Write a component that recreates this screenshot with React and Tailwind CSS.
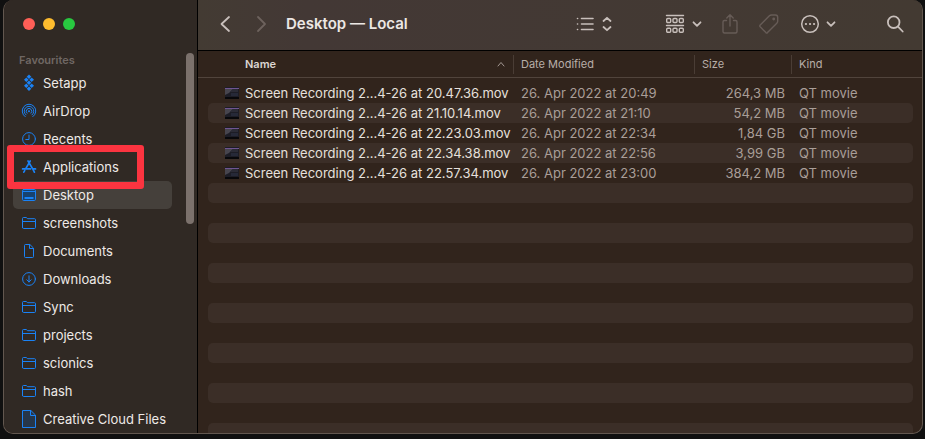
import React from 'react';

function Svg({ children, w = 16, h = 16, sw = 1, className = '' }) {
  return (
    <svg
      width={w}
      height={h}
      viewBox={`0 0 ${w} ${h}`}
      fill="none"
      stroke="currentColor"
      strokeWidth={sw}
      strokeLinecap="round"
      strokeLinejoin="round"
      className={className}
      aria-hidden="true"
    >
      {children}
    </svg>
  );
}

const SetappIcon = () => (
  <Svg h={18}>
    <g fill="currentColor" stroke="none">
      {[[8, 2.8], [5.3, 5.7], [10.7, 5.7], [8, 8.8], [5.3, 11.7], [10.7, 11.7], [8, 14.8]].map(([x, y]) => (
        <path key={`${x}-${y}`} d={`M${x} ${y - 2.3}L${x + 2.3} ${y}L${x} ${y + 2.3}L${x - 2.3} ${y}Z`} />
      ))}
    </g>
  </Svg>
);

const AirDropIcon = () => (
  <Svg>
    <path d="M4.2 13.7A6.8 6.8 0 1 1 11.8 13.7M5 11.9A4.8 4.8 0 1 1 11 11.9M6 10.2A2.8 2.8 0 1 1 10 10.2" />
    <circle cx="8" cy="8.2" r="1" fill="currentColor" stroke="none" />
  </Svg>
);

const ClockIcon = () => (
  <Svg>
    <circle cx="8" cy="8" r="6.4" />
    <path d="M8 4V8.5H4.8" />
  </Svg>
);

const AppsIcon = () => (
  <Svg sw={1.7}>
    <path d="M7 2L12 10.4L13.4 13.2M9.2 2L4.9 9.4M1.6 9.9H9.5M12.1 9.9H14.5M3.7 11.6L2.8 13.2" />
  </Svg>
);

const DesktopIcon = () => (
  <Svg>
    <rect x="1.5" y="2.5" width="13" height="11" rx="1.2" fill="#17426f" />
    <path d="M2 4.5H14" />
    <rect x="3.5" y="10" width="9" height="2" rx="0.5" fill="currentColor" stroke="none" />
  </Svg>
);

const FolderIcon = () => (
  <Svg>
    <path d="M1.5 12.5V3.5Q1.5 2.5 2.5 2.5H5.2L6.7 3.7H13.5Q14.5 3.7 14.5 4.7V12.3Q14.5 13.5 13.5 13.5H2.5Q1.5 13.5 1.5 12.5ZM1.5 6.5H14.5" />
  </Svg>
);

const DocumentIcon = () => (
  <Svg>
    <path d="M8.5 1.5H4.5Q3.5 1.5 3.5 2.5V13.5Q3.5 14.5 4.5 14.5H11.5Q12.5 14.5 12.5 13.5V5.5ZM8.5 1.5V5.5H12.5" />
  </Svg>
);

const DownloadIcon = () => (
  <Svg>
    <circle cx="8" cy="8" r="6.4" />
    <path d="M8 4.8V11M5.8 8.8L8 11L10.2 8.8" />
  </Svg>
);

const FileIcon = () => (
  <Svg h={20}>
    <path d="M9.5 1.5H1.5V18.5H14.5V6.5ZM9.5 1.5V6.5H14.5" fill="#26364a" />
  </Svg>
);

const places = [
  ['Setapp', SetappIcon],
  ['AirDrop', AirDropIcon],
  ['Recents', ClockIcon],
  ['Applications', AppsIcon],
  ['Desktop', DesktopIcon],
  ['screenshots', FolderIcon],
  ['Documents', DocumentIcon],
  ['Downloads', DownloadIcon],
  ['Sync', FolderIcon],
  ['projects', FolderIcon],
  ['scionics', FolderIcon],
  ['hash', FolderIcon],
  ['Creative Cloud Files', FileIcon],
];

const files = [
  ['Screen Recording 2...4-26 at 20.47.36.mov', '26. Apr 2022 at 20:49', '264,3 MB'],
  ['Screen Recording 2...4-26 at 21.10.14.mov', '26. Apr 2022 at 21:10', '54,2 MB'],
  ['Screen Recording 2...4-26 at 22.23.03.mov', '26. Apr 2022 at 22:34', '1,84 GB'],
  ['Screen Recording 2...4-26 at 22.34.38.mov', '26. Apr 2022 at 22:56', '3,99 GB'],
  ['Screen Recording 2...4-26 at 22.57.34.mov', '26. Apr 2022 at 23:00', '384,2 MB'],
];

const emptyRows = Array.from({ length: 13 }, (_, i) => i + files.length);

function Thumbnail() {
  return (
    <svg width="14" height="12" viewBox="0 0 14 12" className="shrink-0" aria-hidden="true">
      <rect width="14" height="12" fill="#1d1d26" />
      <path d="M0 2H8L4 6L0 8Z" fill="#47454e" />
      <path d="M8 2H13V5H5Z" fill="#2b2b36" />
      <path d="M6 6H13V9H6Z" fill="#262938" />
      <path d="M0 1.5H14" stroke="#705590" />
      <path d="M0 11H14" stroke="#08080b" strokeWidth="2" />
    </svg>
  );
}

function Sidebar() {
  return (
    <aside className="flex w-[194px] shrink-0 justify-between border-r border-black bg-[#302924] pr-[3px]">
      <div className="flex w-[168px] flex-col">
        <div className="flex gap-2 pl-[19px] pt-[18px]">
          <button aria-label="Close" className="size-3 rounded-full bg-[#ff5f57]" />
          <button aria-label="Minimise" className="size-3 rounded-full bg-[#febc2e]" />
          <button aria-label="Zoom" className="size-3 rounded-full bg-[#28c840]" />
        </div>
        <h2 className="mt-[22px] pl-[15px] text-[11px] font-semibold leading-4 text-[#6f6763]">Favourites</h2>
        <nav className="mt-px pl-[9px]">
          {places.map(([name, Icon]) => (
            <a
              key={name}
              href="#"
              aria-current={name === 'Desktop' ? 'page' : undefined}
              className={`relative flex h-7 items-center gap-[6px] whitespace-nowrap rounded-[5px] pl-2 ${
                name === 'Desktop' ? 'bg-[#45403b]' : ''
              }`}
            >
              <span className="text-[#1a82f5]"><Icon /></span>
              {name}
              {name === 'Applications' && (
                <span className="absolute -left-[6px] -top-2 z-10 h-11 w-[137px] rounded-[3px] border-[7px] border-[#fb3440]" />
              )}
            </a>
          ))}
        </nav>
      </div>
      <div className="mt-[53px] h-[171px] w-2 rounded-full bg-[#7b716c]" />
    </aside>
  );
}

function Toolbar() {
  return (
    <header className="flex h-[51px] shrink-0 items-center border-b border-black bg-linear-to-r from-[#433b33] via-[#433835] via-15% to-[#433a32] pb-[3px] pr-[17px] text-[#c8bfbb]">
      <button aria-label="Back" className="ml-5">
        <Svg w={14} h={18} sw={1.8}><path d="M11 2L3.5 9L11 16" /></Svg>
      </button>
      <button aria-label="Forward" className="ml-[22px] text-[#6d625d]">
        <Svg w={14} h={18} sw={1.8}><path d="M4 2L11 9L4 16" /></Svg>
      </button>
      <h1 className="ml-[18px] flex-1 whitespace-nowrap text-[15px] font-semibold leading-5 text-[#ece7e4]">Desktop — Local</h1>
      <button aria-label="View as list" className="flex items-center gap-2">
        <Svg w={18} h={16} sw={1.6}>
          <path d="M5.5 2.5H17M5.5 8H17M5.5 13.5H17M1.5 2.5H1.6M1.5 8H1.6M1.5 13.5H1.6" />
        </Svg>
        <Svg w={10} h={16} sw={1.8}><path d="M1.5 5L5 1.8L8.5 5M1.5 11L5 14.2L8.5 11" /></Svg>
      </button>
      <button aria-label="Group" className="ml-[53px] flex items-center gap-[7px]">
        <Svg w={20} h={20} sw={1.4}>
          <path d="M1.5 1.5H18.5M1.5 11.5H18.5" />
          {[4.5, 14.2].map((y) => [1.7, 8, 14.3].map((x) => <rect key={`${x}-${y}`} x={x} y={y} width="4" height="4" rx="1" />))}
        </Svg>
        <Svg w={10} h={8} sw={1.8}><path d="M1.5 2.3L5 5.8L8.5 2.3" /></Svg>
      </button>
      <button aria-label="Share" className="ml-[19px] text-[#675c57]">
        <Svg w={18} h={22} sw={1.4}>
          <path d="M5.5 7.5H3.5Q2 7.5 2 9V18.5Q2 20 3.5 20H14.5Q16 20 16 18.5V9Q16 7.5 14.5 7.5H12.5M9 13V1.8M5.8 5L9 1.8L12.2 5" />
        </Svg>
      </button>
      <button aria-label="Tags" className="ml-[19px] text-[#675c57]">
        <Svg w={22} h={22} sw={1.4}>
          <path d="M2.2 12L11.4 2.8Q12.3 2 13.4 2H17.5Q19.7 2 19.7 4.2V8.2Q19.7 9.3 18.8 10.2L9.5 19.6Q8.7 20.3 7.9 19.6L2.2 13.8Q1.4 12.9 2.2 12Z" />
          <circle cx="15.7" cy="6" r="0.7" />
        </Svg>
      </button>
      <button aria-label="More" className="ml-5 flex items-center gap-[6px]">
        <Svg w={20} h={20} sw={1.5}>
          <circle cx="10" cy="10" r="8.3" />
          <path d="M5.9 10H6M10 10H10.1M14 10H14.1" strokeWidth="2.2" />
        </Svg>
        <Svg w={10} h={8} sw={1.8}><path d="M1.5 2.3L5 5.8L8.5 2.3" /></Svg>
      </button>
      <button aria-label="Search" className="ml-[49px]">
        <Svg w={20} h={20} sw={1.8}>
          <circle cx="8.7" cy="8.2" r="5.8" />
          <path d="M13.2 12.8L17.7 17.5" />
        </Svg>
      </button>
    </header>
  );
}

function HeadCell({ children }) {
  return (
    <th scope="col" className="border-b border-[#51443c] p-0 font-normal">
      <div className="flex h-[19px] items-center border-l border-[#4a3d35] pl-[7px]">{children}</div>
    </th>
  );
}

function FileTable() {
  return (
    <table className="w-full table-fixed border-separate border-spacing-0 whitespace-nowrap text-left">
      <colgroup>
        <col className="w-[10px]" />
        <col className="w-[305px]" />
        <col className="w-[181px]" />
        <col className="w-[97px]" />
        <col />
        <col className="w-[9px]" />
      </colgroup>
      <thead className="text-[11px] text-[#b8aea8]">
        <tr className="h-[27px]">
          <td className="border-b border-[#51443c] p-0" />
          <th scope="col" aria-sort="ascending" className="border-b border-[#51443c] p-0 font-semibold text-[#dcd6d2]">
            <div className="flex items-center justify-between pl-[37px] pr-2">
              Name
              <Svg w={8} h={6} className="text-[#a39892]"><path d="M1 5L4 1.5L7 5" /></Svg>
            </div>
          </th>
          <HeadCell>Date Modified</HeadCell>
          <HeadCell>Size</HeadCell>
          <HeadCell>Kind</HeadCell>
          <td className="border-b border-[#51443c] p-0" />
        </tr>
        <tr className="h-[5px]"><td colSpan={6} className="p-0" /></tr>
      </thead>
      <tbody className="text-[#a99e98]">
        {files.map(([name, date, size], i) => {
          const bg = i % 2 ? 'bg-[#3b2e27]' : '';
          return (
            <tr key={name} className="h-5">
              <td className="p-0" />
              <td className={`rounded-l-[5px] p-0 text-[#e6e0dc] ${bg}`}>
                <div className="flex items-center gap-[6px] pl-[17px]"><Thumbnail />{name}</div>
              </td>
              <td className={`p-0 pl-2 ${bg}`}>{date}</td>
              <td className={`p-0 pr-[6px] text-right ${bg}`}>{size}</td>
              <td className={`rounded-r-[5px] p-0 pl-2 ${bg}`}>QT movie</td>
              <td className="p-0" />
            </tr>
          );
        })}
        {emptyRows.map((i) => (
          <tr key={i} className="h-5">
            <td className="p-0" />
            <td colSpan={4} className={`rounded-[5px] p-0 ${i % 2 ? 'bg-[#3b2e27]' : ''}`} />
            <td className="p-0" />
          </tr>
        ))}
      </tbody>
    </table>
  );
}

export default function App() {
  return (
    <div className="h-screen overflow-hidden bg-[#101010] pb-[5px] pl-[3px] pr-[2px] font-[Inter,'Liberation_Sans',sans-serif] text-[13px] font-normal leading-5 text-[#eeeae7]">
      <div className="flex h-full overflow-hidden rounded-[10px] border-x border-b border-[#62574f] bg-[#31241c]">
        <Sidebar />
        <main className="flex min-w-0 flex-1 flex-col">
          <Toolbar />
          <div className="min-h-0 flex-1 overflow-hidden">
            <FileTable />
          </div>
        </main>
      </div>
    </div>
  );
}
